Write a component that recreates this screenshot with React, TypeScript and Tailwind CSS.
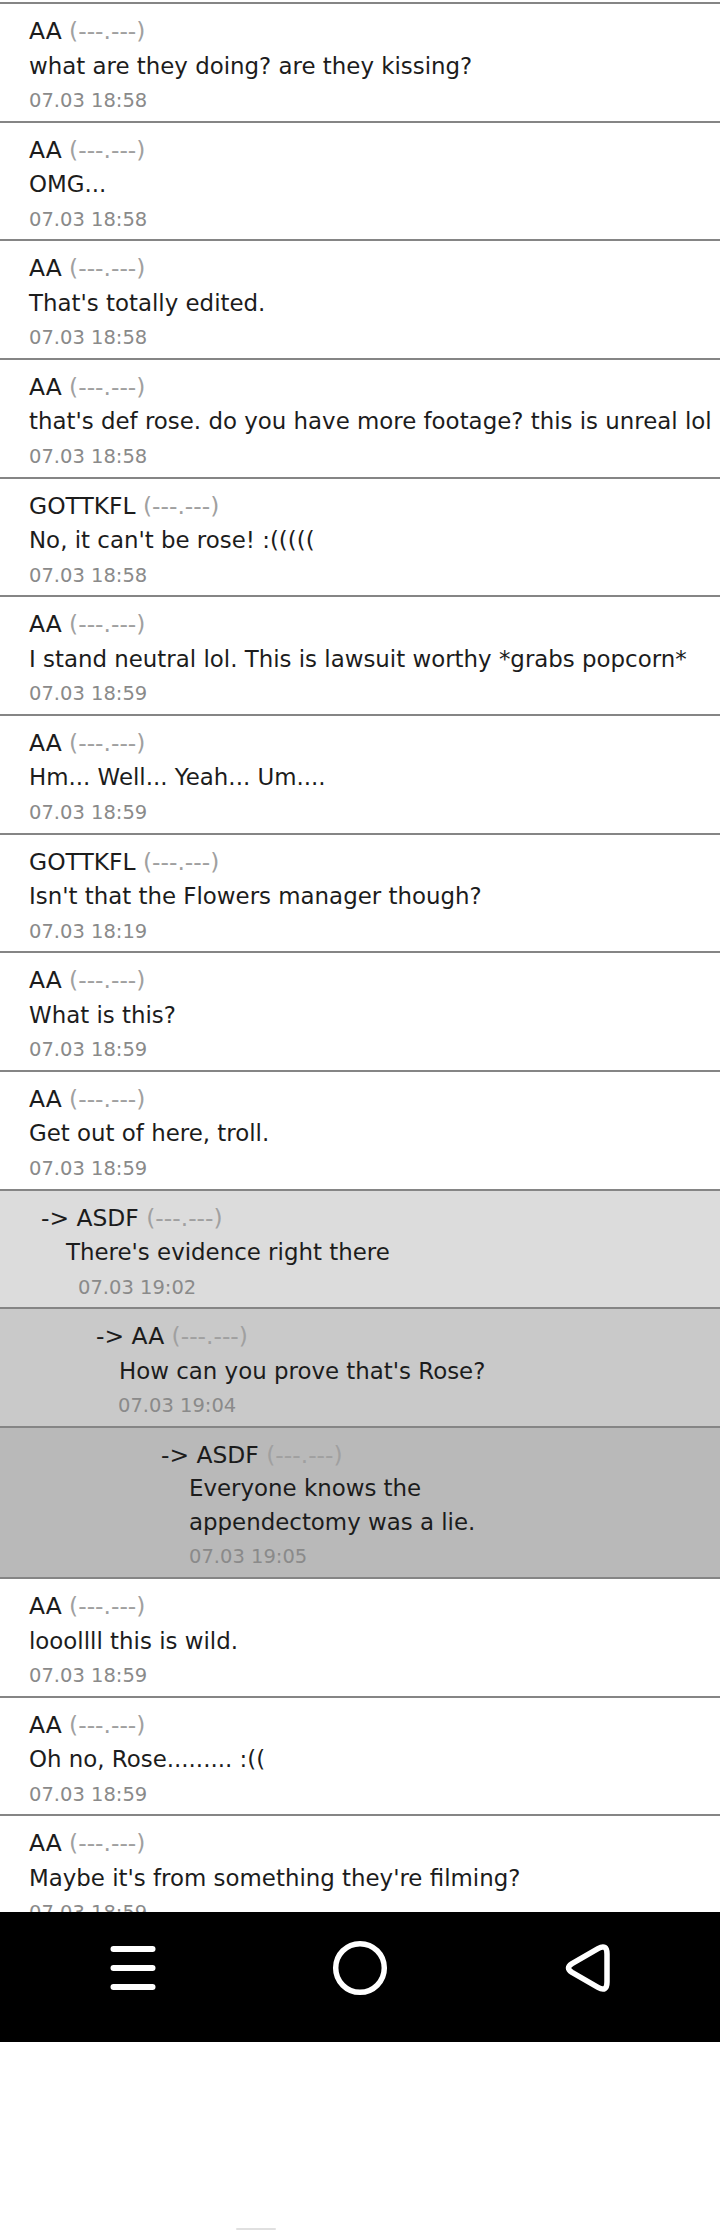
import React from "react";

type Msg = {
  name: string;
  text: React.ReactNode;
  date: string;
  level?: 0 | 1 | 2 | 3;
};

const messages: Msg[] = [
  { name: "AA", text: "what are they doing? are they kissing?", date: "07.03 18:58" },
  { name: "AA", text: "OMG...", date: "07.03 18:58" },
  { name: "AA", text: "That's totally edited.", date: "07.03 18:58" },
  { name: "AA", text: "that's def rose. do you have more footage? this is unreal lol", date: "07.03 18:58" },
  { name: "GOTTKFL", text: "No, it can't be rose! :(((((", date: "07.03 18:58" },
  { name: "AA", text: "I stand neutral lol. This is lawsuit worthy *grabs popcorn*", date: "07.03 18:59" },
  { name: "AA", text: "Hm... Well... Yeah... Um....", date: "07.03 18:59" },
  { name: "GOTTKFL", text: "Isn't that the Flowers manager though?", date: "07.03 18:19" },
  { name: "AA", text: "What is this?", date: "07.03 18:59" },
  { name: "AA", text: "Get out of here, troll.", date: "07.03 18:59" },
  { name: "ASDF", text: "There's evidence right there", date: "07.03 19:02", level: 1 },
  { name: "AA", text: "How can you prove that's Rose?", date: "07.03 19:04", level: 2 },
  { name: "ASDF", text: "Everyone knows the appendectomy was a lie.", date: "07.03 19:05", level: 3 },
  { name: "AA", text: "looollll this is wild.", date: "07.03 18:59" },
  { name: "AA", text: "Oh no, Rose......... :((", date: "07.03 18:59" },
  { name: "AA", text: "Maybe it's from something they're filming?", date: "07.03 18:59" },
];

function Row({ m }: { m: Msg }) {
  const level = m.level ?? 0;
  const bg =
    level === 1 ? "bg-[#dcdcdc]" : level === 2 ? "bg-[#c9c9c9]" : level === 3 ? "bg-[#b9b9b9]" : "bg-white";
  const namePad =
    level === 1 ? "pl-[41px]" : level === 2 ? "pl-[96px]" : level === 3 ? "pl-[161px]" : "pl-[29px]";
  const msgPad =
    level === 1 ? "pl-[66px]" : level === 2 ? "pl-[119px]" : level === 3 ? "pl-[189px]" : "pl-[29px]";
  const datePad =
    level === 1 ? "pl-[78px]" : level === 2 ? "pl-[118px]" : level === 3 ? "pl-[189px]" : "pl-[29px]";
  return (
    <div className={`border-t-2 border-[#858585] ${bg} pt-[10px] pb-[2.67px]`}>
      <div className={`${namePad} text-[23.4px] leading-[34.5px] whitespace-nowrap text-[#1c1c1c]`}>
        {level > 0 && <span>-&gt; </span>}
        <span>{m.name}</span>
        <span className="text-[#a0a0a0]"> (---.---)</span>
      </div>
      <div
        className={`${msgPad} text-[22.9px] text-[#1c1c1c] ${
          level === 3 ? "leading-[33.5px] max-w-[530px]" : "leading-[34.5px] whitespace-nowrap"
        }`}
      >
        {m.text}
      </div>
      <div className={`${datePad} text-[19.5px] leading-[35px] text-[#8a8a8a] whitespace-nowrap`}>{m.date}</div>
    </div>
  );
}

function MenuIcon() {
  return (
    <svg width="46" height="46" viewBox="0 0 46 46" fill="none">
      <line x1="3.5" y1="4" x2="42.5" y2="4" stroke="white" strokeWidth="6" strokeLinecap="round" />
      <line x1="3.5" y1="23" x2="42.5" y2="23" stroke="white" strokeWidth="6" strokeLinecap="round" />
      <line x1="3.5" y1="42" x2="42.5" y2="42" stroke="white" strokeWidth="6" strokeLinecap="round" />
    </svg>
  );
}

function HomeIcon() {
  return (
    <svg width="56" height="56" viewBox="0 0 56 56" fill="none">
      <circle cx="28" cy="28" r="24.3" stroke="white" strokeWidth="5.5" />
    </svg>
  );
}

function BackIcon() {
  return (
    <svg width="50" height="52" viewBox="0 0 50 52" fill="none">
      <path
        d="M10 21.6 L36 6.6 Q45 1.6 45 12 L45 40 Q45 50.4 36 45.4 L10 30.4 Q3 26 10 21.6 Z"
        stroke="white"
        strokeWidth="5.5"
        strokeLinejoin="round"
      />
    </svg>
  );
}

export default function App() {
  return (
    <div className="w-[720px] h-[2230px] bg-white flex flex-col font-['DejaVu_Sans',sans-serif]">
      <div className="h-[1912px] overflow-hidden pt-[2px] shrink-0">
        {messages.map((m, i) => (
          <Row key={i} m={m} />
        ))}
      </div>
      <div className="h-[130px] bg-black shrink-0 flex justify-center items-center pb-[18px]">
        <div className="w-[227px] flex justify-center">
          <MenuIcon />
        </div>
        <div className="w-[227px] flex justify-center">
          <HomeIcon />
        </div>
        <div className="w-[227px] flex justify-center">
          <BackIcon />
        </div>
      </div>
      <div className="flex-1 flex items-end">
        <div className="ml-[236px] w-[40px] h-[2px] rounded-full bg-[#e0e0e0]" />
      </div>
    </div>
  );
}
